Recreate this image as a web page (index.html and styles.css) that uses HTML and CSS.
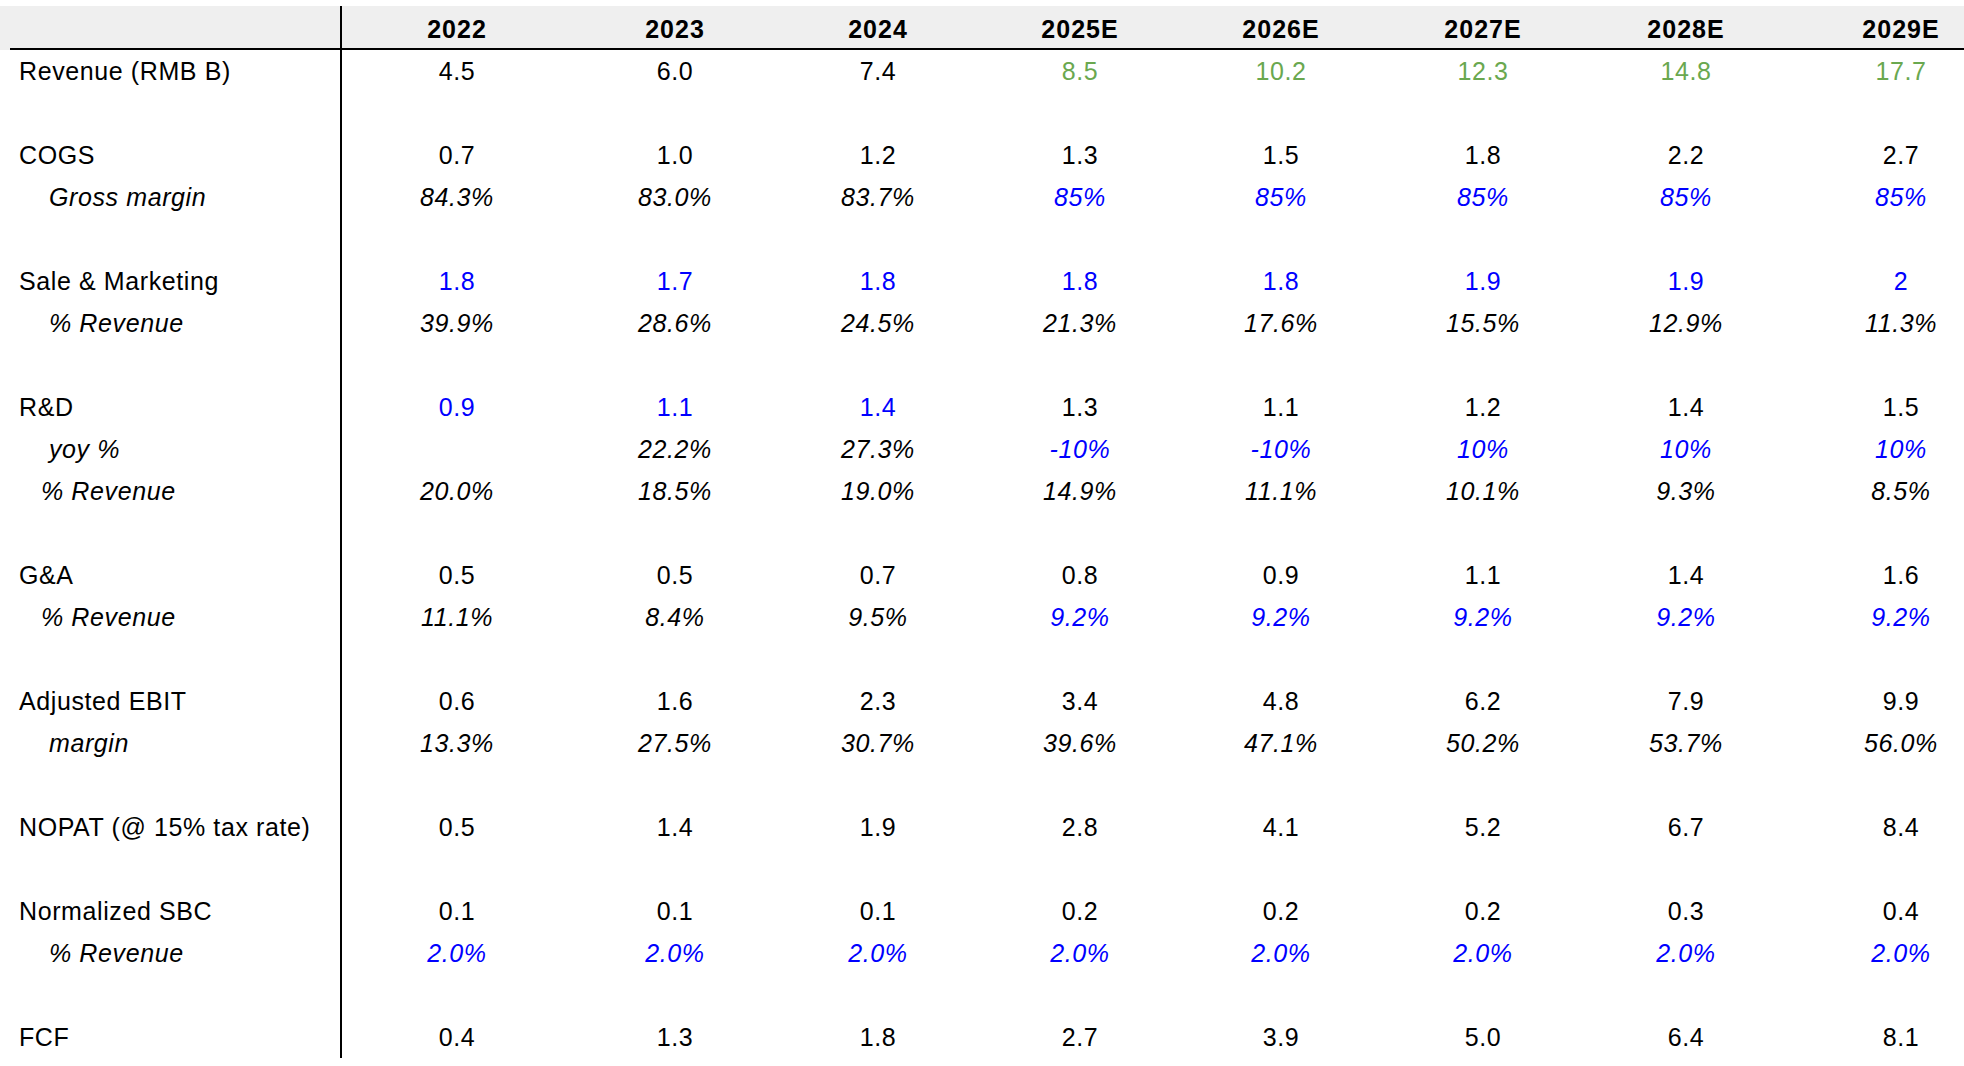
FILE: index.html
```html
<!DOCTYPE html>
<html lang="en">
<head>
<meta charset="utf-8">
<title>Financial model</title>
<link rel="stylesheet" href="styles.css">
</head>
<body>
<div class="sheet">
  <div class="head">
    <div class="h-gap"></div>
    <div class="h-label"></div>
    <div class="h-cell">2022</div>
    <div class="h-cell">2023</div>
    <div class="h-cell">2024</div>
    <div class="h-cell">2025E</div>
    <div class="h-cell">2026E</div>
    <div class="h-cell">2027E</div>
    <div class="h-cell">2028E</div>
    <div class="h-cell">2029E</div>
  </div>

  <div class="row">
    <div class="label">Revenue (RMB B)</div>
    <div class="c">4.5</div><div class="c">6.0</div><div class="c">7.4</div>
    <div class="c green">8.5</div><div class="c green">10.2</div><div class="c green">12.3</div><div class="c green">14.8</div><div class="c green">17.7</div>
  </div>
  <div class="row"><div class="label"></div></div>

  <div class="row">
    <div class="label">COGS</div>
    <div class="c">0.7</div><div class="c">1.0</div><div class="c">1.2</div><div class="c">1.3</div><div class="c">1.5</div><div class="c">1.8</div><div class="c">2.2</div><div class="c">2.7</div>
  </div>
  <div class="row it">
    <div class="label in-a">Gross margin</div>
    <div class="c">84.3%</div><div class="c">83.0%</div><div class="c">83.7%</div>
    <div class="c blue">85%</div><div class="c blue">85%</div><div class="c blue">85%</div><div class="c blue">85%</div><div class="c blue">85%</div>
  </div>
  <div class="row"><div class="label"></div></div>

  <div class="row">
    <div class="label">Sale &amp; Marketing</div>
    <div class="c blue">1.8</div><div class="c blue">1.7</div><div class="c blue">1.8</div><div class="c blue">1.8</div><div class="c blue">1.8</div><div class="c blue">1.9</div><div class="c blue">1.9</div><div class="c blue">2</div>
  </div>
  <div class="row it">
    <div class="label in-a">% Revenue</div>
    <div class="c">39.9%</div><div class="c">28.6%</div><div class="c">24.5%</div><div class="c">21.3%</div><div class="c">17.6%</div><div class="c">15.5%</div><div class="c">12.9%</div><div class="c">11.3%</div>
  </div>
  <div class="row"><div class="label"></div></div>

  <div class="row">
    <div class="label">R&amp;D</div>
    <div class="c blue">0.9</div><div class="c blue">1.1</div><div class="c blue">1.4</div>
    <div class="c">1.3</div><div class="c">1.1</div><div class="c">1.2</div><div class="c">1.4</div><div class="c">1.5</div>
  </div>
  <div class="row it">
    <div class="label in-a">yoy %</div>
    <div class="c"></div><div class="c">22.2%</div><div class="c">27.3%</div>
    <div class="c blue">-10%</div><div class="c blue">-10%</div><div class="c blue">10%</div><div class="c blue">10%</div><div class="c blue">10%</div>
  </div>
  <div class="row it">
    <div class="label in-b">% Revenue</div>
    <div class="c">20.0%</div><div class="c">18.5%</div><div class="c">19.0%</div><div class="c">14.9%</div><div class="c">11.1%</div><div class="c">10.1%</div><div class="c">9.3%</div><div class="c">8.5%</div>
  </div>
  <div class="row"><div class="label"></div></div>

  <div class="row">
    <div class="label">G&amp;A</div>
    <div class="c">0.5</div><div class="c">0.5</div><div class="c">0.7</div><div class="c">0.8</div><div class="c">0.9</div><div class="c">1.1</div><div class="c">1.4</div><div class="c">1.6</div>
  </div>
  <div class="row it">
    <div class="label in-b">% Revenue</div>
    <div class="c">11.1%</div><div class="c">8.4%</div><div class="c">9.5%</div>
    <div class="c blue">9.2%</div><div class="c blue">9.2%</div><div class="c blue">9.2%</div><div class="c blue">9.2%</div><div class="c blue">9.2%</div>
  </div>
  <div class="row"><div class="label"></div></div>

  <div class="row">
    <div class="label">Adjusted EBIT</div>
    <div class="c">0.6</div><div class="c">1.6</div><div class="c">2.3</div><div class="c">3.4</div><div class="c">4.8</div><div class="c">6.2</div><div class="c">7.9</div><div class="c">9.9</div>
  </div>
  <div class="row it">
    <div class="label in-a">margin</div>
    <div class="c">13.3%</div><div class="c">27.5%</div><div class="c">30.7%</div><div class="c">39.6%</div><div class="c">47.1%</div><div class="c">50.2%</div><div class="c">53.7%</div><div class="c">56.0%</div>
  </div>
  <div class="row"><div class="label"></div></div>

  <div class="row">
    <div class="label">NOPAT (@ 15% tax rate)</div>
    <div class="c">0.5</div><div class="c">1.4</div><div class="c">1.9</div><div class="c">2.8</div><div class="c">4.1</div><div class="c">5.2</div><div class="c">6.7</div><div class="c">8.4</div>
  </div>
  <div class="row"><div class="label"></div></div>

  <div class="row">
    <div class="label">Normalized SBC</div>
    <div class="c">0.1</div><div class="c">0.1</div><div class="c">0.1</div><div class="c">0.2</div><div class="c">0.2</div><div class="c">0.2</div><div class="c">0.3</div><div class="c">0.4</div>
  </div>
  <div class="row it">
    <div class="label in-a">% Revenue</div>
    <div class="c blue">2.0%</div><div class="c blue">2.0%</div><div class="c blue">2.0%</div><div class="c blue">2.0%</div><div class="c blue">2.0%</div><div class="c blue">2.0%</div><div class="c blue">2.0%</div><div class="c blue">2.0%</div>
  </div>
  <div class="row"><div class="label"></div></div>

  <div class="row">
    <div class="label">FCF</div>
    <div class="c">0.4</div><div class="c">1.3</div><div class="c">1.8</div><div class="c">2.7</div><div class="c">3.9</div><div class="c">5.0</div><div class="c">6.4</div><div class="c">8.1</div>
  </div>
</div>
</body>
</html>
```

FILE: styles.css
```css
html, body {
  margin: 0;
  padding: 0;
  background: #ffffff;
  overflow: hidden;
}

body {
  font-family: "Liberation Sans", Arial, Helvetica, sans-serif;
  color: #000000;
}

.sheet {
  width: 2016px;
  padding-top: 6px;
}

.head {
  display: grid;
  grid-template-columns: 10px 332px 230px 206px 200px 204px 198px 206px 200px 230px;
  background: #efefef;
  height: 44px;
}

.h-gap {
  height: 44px;
}

.h-label {
  border-bottom: 2px solid #000000;
  border-right: 2px solid #000000;
  height: 44px;
  box-sizing: border-box;
}

.h-cell {
  box-sizing: border-box;
  height: 44px;
  border-bottom: 2px solid #000000;
  padding-top: 4px;
  line-height: 38px;
  font-size: 25px;
  font-weight: bold;
  letter-spacing: 1px;
  text-align: center;
  background: #efefef;
}

.row {
  display: grid;
  grid-template-columns: 342px 230px 206px 200px 204px 198px 206px 200px 230px;
  height: 42px;
  font-size: 25px;
  line-height: 42px;
  letter-spacing: 0.6px;
  background: #ffffff;
}

.label {
  box-sizing: border-box;
  height: 42px;
  padding-left: 19px;
  border-right: 2px solid #000000;
  white-space: nowrap;
}

.label.in-a {
  padding-left: 49px;
}

.label.in-b {
  padding-left: 41px;
}

.it {
  font-style: italic;
}

.c {
  text-align: center;
  white-space: nowrap;
}

.green {
  color: #6aa84f;
}

.blue {
  color: #0000ff;
}
```
